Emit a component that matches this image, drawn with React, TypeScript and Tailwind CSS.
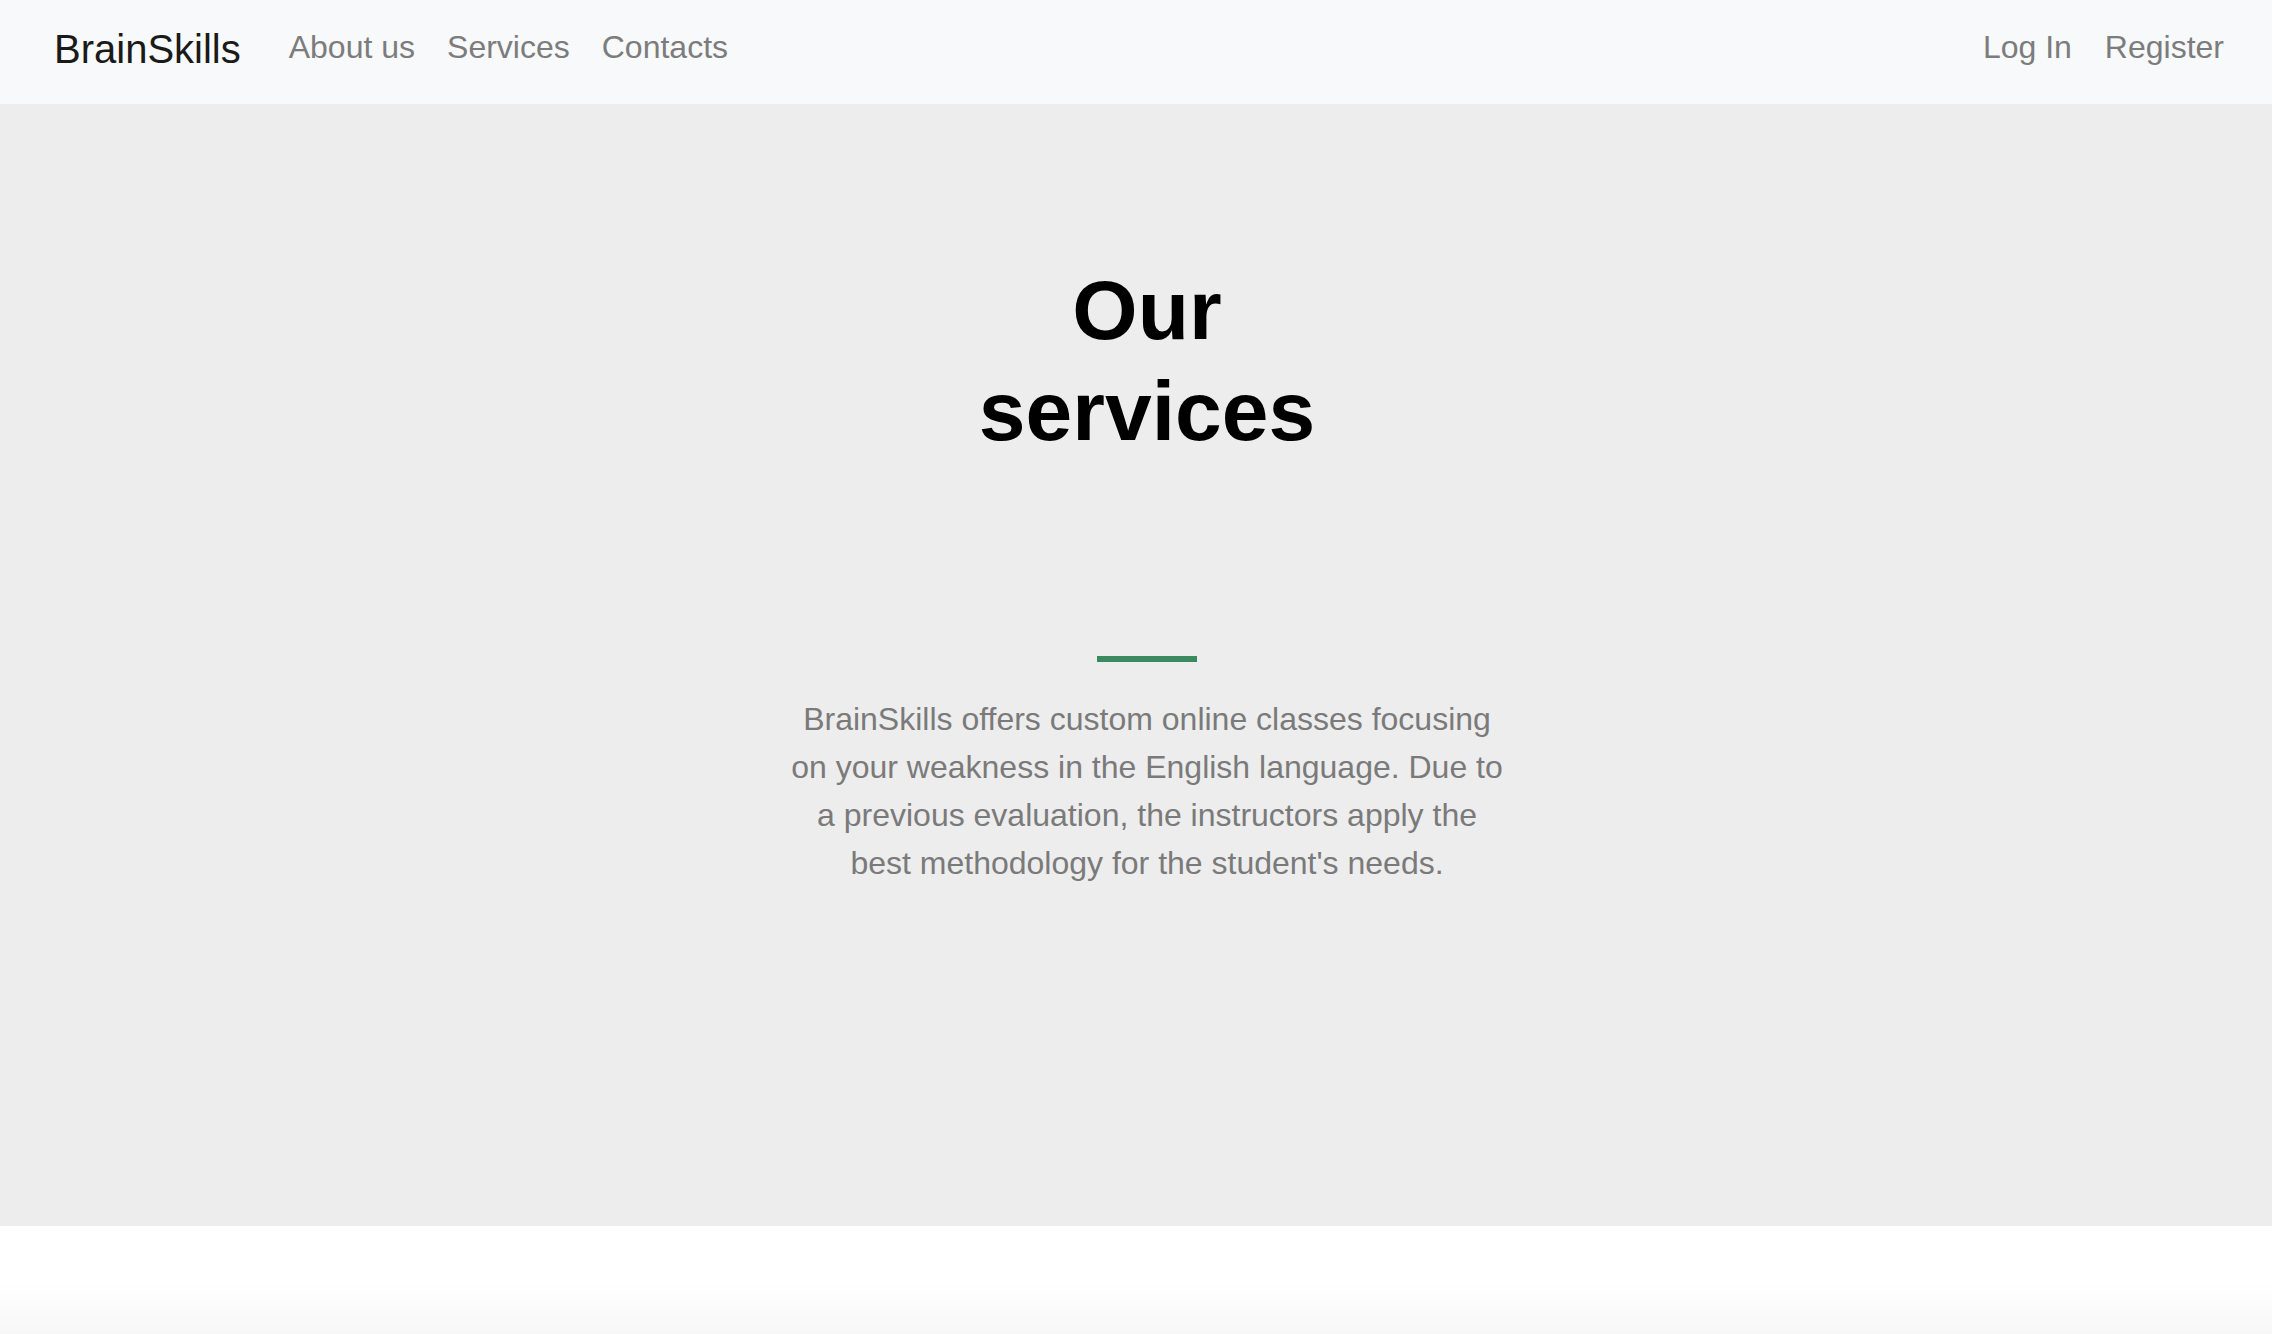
import React from 'react'

function App() {
  const links = ["About us", "Services", "Contacts"];

  return (
    <div className="min-h-screen w-full bg-white font-['Liberation_Sans',Arial,sans-serif]">
      {/* Navbar */}
      <nav className="flex h-[104px] items-start justify-between bg-[#f8f9fa] pl-[54px] pr-[48px]">
        <div className="flex items-start">
          <a className="mt-[19px] text-[40px] leading-[60px] text-[#1a1a1a]">BrainSkills</a>
          <ul className="ml-[32px] mt-[23px] flex">
            {links.map((link) => (
              <li key={link} className="px-[16px] text-[32px] leading-[48px] text-[#7c7c7d]">
                {link}
              </li>
            ))}
          </ul>
        </div>
        <ul className="mt-[23px] flex gap-[33px] text-[32px] leading-[48px] text-[#7c7c7d]">
          <li>Log In</li>
          <li>Register</li>
        </ul>
      </nav>

      {/* Services hero */}
      <section className="flex flex-col items-center bg-[#ededed] pl-[22px] pt-[156px] pb-[339px]">
        <h1 className="w-[480px] text-center text-[84px] font-bold leading-[101px] text-black">
          Our services
        </h1>
        <div className="mt-[194px] h-[6px] w-[100px] bg-[#3b8a5f]" />
        <p className="mt-[33px] w-[724px] text-center text-[32px] leading-[48px] text-[#7a7a7a]">
          BrainSkills offers custom online classes focusing on your weakness in the English language. Due to a
          previous evaluation, the instructors apply the best methodology for the student's needs.
        </p>
      </section>

      <div className="h-[110px] bg-gradient-to-b from-white from-50% to-[#f7f7f7]" />
    </div>
  );
}

export default App;
